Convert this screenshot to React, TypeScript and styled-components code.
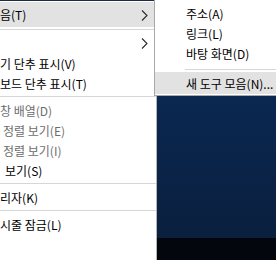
import styled, { createGlobalStyle } from 'styled-components';

const GlobalStyle = createGlobalStyle`
  html, body {
    margin: 0;
    padding: 0;
    overflow: hidden;
    background: #04070d;
  }
`;

const Screen = styled.div`
  position: relative;
  width: 276px;
  height: 260px;
  display: flex;
  overflow: hidden;
  font-family: 'Noto Sans CJK KR', 'Noto Sans', sans-serif;
  font-size: 12px;
  color: #000;
`;

// the menu runs on past the left edge of the shot, so only the tail of each label shows
const MainMenu = styled.div`
  flex: none;
  width: 156px;
  padding-top: 1px;
  background: #fff;
  border-top: 1px solid #1d2b42;
  border-right: 1px solid #b5b5b5;
  display: flex;
  flex-direction: column;
`;

const Item = styled.div<{ $active?: boolean; $disabled?: boolean; $tall?: boolean; $indent?: number }>`
  position: relative;
  height: ${(p) => (p.$tall ? '25px' : '20px')};
  padding-left: ${(p) => p.$indent ?? 0}px;
  display: flex;
  align-items: center;
  white-space: nowrap;
  background: ${(p) => (p.$active ? '#e2e2e2' : 'transparent')};
  color: ${(p) => (p.$disabled ? '#6d6d6d' : '#000')};
`;

const Separator = styled.div<{ $top?: number; $bottom?: number; $indent?: number }>`
  height: 1px;
  margin: ${(p) => p.$top ?? 3}px 0 ${(p) => p.$bottom ?? 3}px ${(p) => p.$indent ?? 0}px;
  background: #d6d6d6;
`;

const Chevron = styled.svg`
  position: absolute;
  right: 8px;
  top: 50%;
  margin-top: -5px;
`;

const Desktop = styled.div`
  flex: 1;
  display: flex;
  flex-direction: column;
`;

const Wallpaper = styled.div`
  flex: 1;
  background: linear-gradient(#0b2c58 0%, #0a2750 45%, #0b1f3e 100%);
`;

const Taskbar = styled.div`
  height: 22px;
  background: #03060c;
`;

const SubMenu = styled.div`
  position: absolute;
  left: 154px;
  top: 0;
  width: 140px;
  padding-top: 3px;
  padding-bottom: 1px;
  background: #fff;
  border-left: 1px solid #a9a9a9;
  border-bottom: 1px solid #a9a9a9;
  display: flex;
  flex-direction: column;
`;

const SubItem = styled.div<{ $active?: boolean }>`
  height: ${(p) => (p.$active ? '22px' : '20px')};
  padding-left: 31px;
  display: flex;
  align-items: center;
  white-space: nowrap;
  background: ${(p) => (p.$active ? '#e2e2e2' : 'transparent')};
`;

const Arrow = () => (
  <Chevron width="7" height="11" viewBox="0 0 7 11">
    <path d="M1 0.5 L6 5.5 L1 10.5" fill="none" stroke="#2a2a2a" strokeWidth="1.1" />
  </Chevron>
);

const App = () => {
  return (
    <>
      <GlobalStyle />
      <Screen>
        <MainMenu>
          <Item $tall $active>
            음(T)
            <Arrow />
          </Item>
          <Separator $top={2} $bottom={3} />
          <Item>
            <Arrow />
          </Item>
          <Item>기 단추 표시(V)</Item>
          <Item>보드 단추 표시(T)</Item>
          <Separator />
          <Item $disabled>창 배열(D)</Item>
          <Item $disabled $indent={3}>정렬 보기(E)</Item>
          <Item $disabled $indent={3}>정렬 보기(I)</Item>
          <Item $indent={5}>보기(S)</Item>
          <Separator />
          <Item>리자(K)</Item>
          <Separator />
          <Item>시줄 잠금(L)</Item>
        </MainMenu>
        <Desktop>
          <Wallpaper />
          <Taskbar />
        </Desktop>
        <SubMenu>
          <SubItem>주소(A)</SubItem>
          <SubItem>링크(L)</SubItem>
          <SubItem>바탕 화면(D)</SubItem>
          <Separator $top={6} $bottom={2} $indent={30} />
          <SubItem $active>새 도구 모음(N)...</SubItem>
        </SubMenu>
      </Screen>
    </>
  );
};

export default App;
